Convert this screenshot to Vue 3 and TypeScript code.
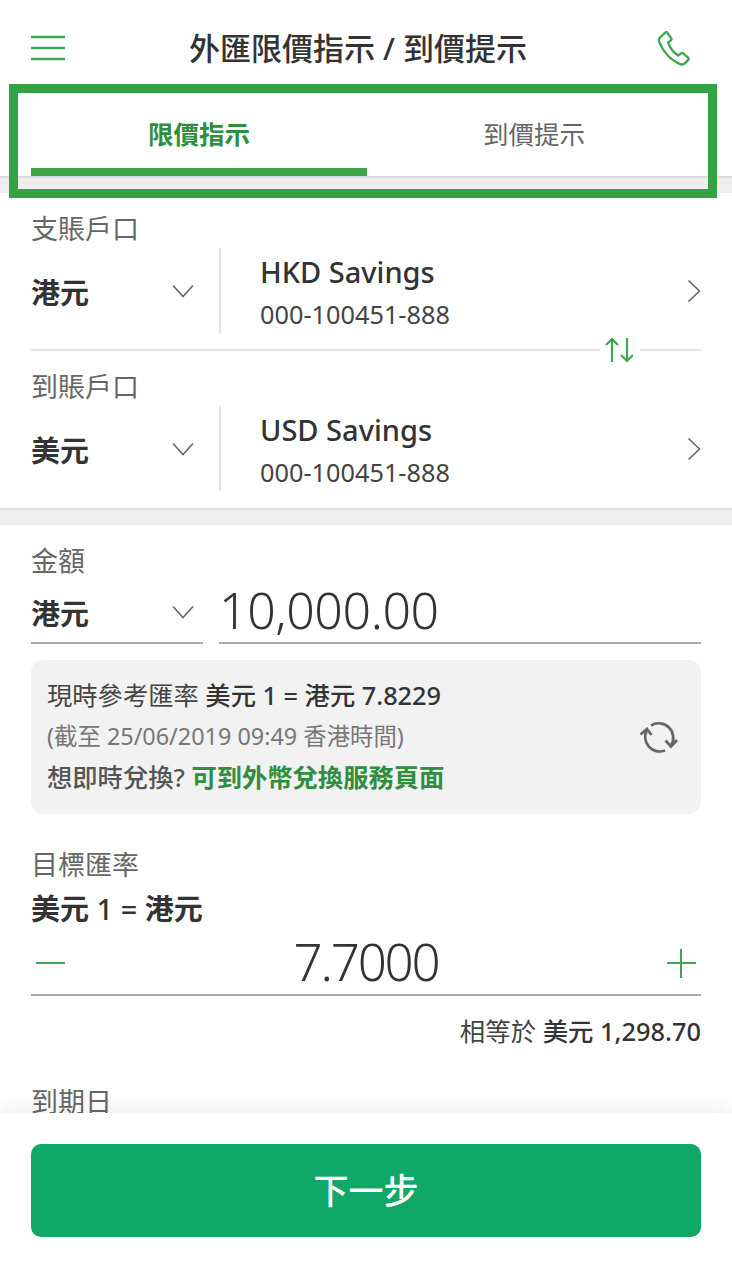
<script setup lang="ts">
interface Account {
  label: string
  currency: string
  name: string
  number: string
}

const accounts: Account[] = [
  { label: '支賬戶口', currency: '港元', name: 'HKD Savings', number: '000-100451-888' },
  { label: '到賬戶口', currency: '美元', name: 'USD Savings', number: '000-100451-888' },
]
</script>

<template>
  <div class="page">
    <div class="content">
      <header class="header">
        <svg class="menu" width="36" height="26" viewBox="0 0 36 26" fill="none" stroke="#3fa652" stroke-width="2.4">
          <path d="M1 2h34M1 13h34M1 24h34" />
        </svg>
        <h1 class="title">外匯限價指示 / 到價提示</h1>
        <svg class="phone" width="36" height="36" viewBox="0 0 36 36" fill="none" stroke="#3fa652" stroke-width="2.4" stroke-linejoin="round">
          <path d="M3 7.5 8.2 2.6c.8-.7 1.7-.6 2.3.2l3.6 5.4c.5.8.4 1.6-.3 2.2l-2.6 2.2c1.5 4.700 5.500 10 10 13l2.900-2.300c.7-.5 1.500-.5 2.200.1l4.800 4.200c.8.700.8 1.600.1 2.300l-3.400 3.500c-1.200 1.100-2.900 1.400-4.500.7C13.500 30.500 5.500 21 2.300 11.800 1.800 10.200 2 8.600 3 7.500Z" />
        </svg>
      </header>

      <div class="tabs-wrap">
        <nav class="tabs">
          <div class="tab tab--active">限價指示</div>
          <div class="tab">到價提示</div>
        </nav>
        <div class="band"></div>
        <div class="frame"></div>
      </div>

      <section class="accounts">
        <template v-for="(acc, i) in accounts" :key="acc.label">
          <div class="label">{{ acc.label }}</div>
          <div class="account-row">
            <div class="currency">
              <span>{{ acc.currency }}</span>
              <svg width="22" height="14" viewBox="0 0 22 14" fill="none" stroke="#666" stroke-width="1.600">
                <path d="M1 1.500 11 12.500 21 1.500" />
              </svg>
            </div>
            <div class="account">
              <div class="account-name">{{ acc.name }}</div>
              <div class="account-number">{{ acc.number }}</div>
            </div>
            <svg class="arrow" width="14" height="24" viewBox="0 0 14 24" fill="none" stroke="#666" stroke-width="1.600">
              <path d="M1.500 1.500 12.500 12 1.500 22.500" />
            </svg>
          </div>
          <div v-if="i === 0" class="separator">
            <svg class="swap" width="28" height="26" viewBox="0 0 28 26" fill="none" stroke="#3fa652" stroke-width="2.200">
              <path d="M7 25V2M1 8 7 2l6 6M22 1v23M16 18l6 6 6-6" />
            </svg>
          </div>
        </template>
      </section>

      <div class="band"></div>

      <section class="form">
        <div class="label">金額</div>
        <div class="amount-row">
          <div class="currency currency--input">
            <span>港元</span>
            <svg width="22" height="14" viewBox="0 0 22 14" fill="none" stroke="#666" stroke-width="1.600">
              <path d="M1 1.500 11 12.500 21 1.500" />
            </svg>
          </div>
          <div class="amount">10,000.00</div>
        </div>

        <div class="rate-card">
          <div class="rate-text">
            <p class="rate-line">現時參考匯率 <b>美元 1 = 港元 7.8229</b></p>
            <p class="rate-line rate-line--muted">(截至 25/06/2019 09:49 香港時間)</p>
            <p class="rate-line rate-line--cta"><b>想即時兌換?</b> <a class="link">可到外幣兌換服務頁面</a></p>
          </div>
          <svg class="refresh" width="40" height="36" viewBox="18 15 40 36" fill="none" stroke="#666" stroke-width="2.700">
            <path d="M30 20.500A14.500 14.500 0 0 1 50 40.500" />
            <path d="M44.500 35.500 50 41.500 56 35" />
            <path d="M44 45.500A14.500 14.500 0 0 1 26 25" />
            <path d="M19.500 29.500 26 24 30.500 30" />
          </svg>
        </div>

        <div class="label label--target">目標匯率</div>
        <div class="pair"><b>美元</b> 1 = <b>港元</b></div>
        <div class="stepper">
          <span class="step step--minus"></span>
          <span class="rate-value">7.7000</span>
          <span class="step step--plus"></span>
        </div>
        <div class="equal">相等於 <b>美元 1,298.70</b></div>
        <div class="label label--expiry">到期日</div>
      </section>
    </div>

    <footer class="footer">
      <button class="next" type="button">下一步</button>
    </footer>
  </div>
</template>

<style scoped>
.page {
  position: relative;
  width: 732px;
  height: 1269px;
  display: flex;
  flex-direction: column;
  overflow: hidden;
  background: #fff;
  font-family: "Noto Sans", "Noto Sans CJK TC", sans-serif;
  color: #333;
}

.content {
  flex: 1;
  min-height: 0;
  overflow: hidden;
}

.header {
  height: 84px;
  display: flex;
  align-items: center;
  justify-content: space-between;
  padding: 0 39px 0 30px;
  position: relative;
}

.menu {
  margin-top: 12px;
}

.phone {
  margin-top: 11px;
}

.title {
  margin: 0;
  position: absolute;
  left: 0;
  right: 16px;
  top: 26px;
  line-height: 44px;
  text-align: center;
  font-size: 31px;
  font-weight: 500;
  color: #333;
}

.tabs-wrap {
  position: relative;
}

.tabs {
  display: flex;
  padding: 0 31px;
  height: 92px;
}

.tab {
  flex: 1;
  text-align: center;
  font-size: 25.5px;
  line-height: 100px;
  height: 92px;
  box-sizing: border-box;
  color: #666;
}

.tab--active {
  flex: 0 0 336px;
  color: #2f8f3e;
  font-weight: 700;
  border-bottom: 8px solid #3fa648;
}

.band {
  height: 17px;
  box-sizing: border-box;
  background: #eee;
  border-top: 2px solid #ddd;
}

.frame {
  position: absolute;
  left: 9px;
  top: 0;
  width: 708px;
  height: 114px;
  box-sizing: border-box;
  border: 9px solid #34a244;
}

.accounts {
  padding: 18px 31px 17px;
}

.label {
  font-size: 27px;
  line-height: 36px;
  color: #666;
}

.account-row {
  display: flex;
  align-items: center;
  height: 85px;
  margin-top: 1px;
}

.currency {
  width: 190px;
  flex: none;
  height: 100%;
  box-sizing: border-box;
  display: flex;
  align-items: center;
  justify-content: space-between;
  padding-right: 25px;
  border-right: 2px solid #e4e4e4;
  font-size: 29px;
  font-weight: 700;
  color: #333;
}

.account {
  flex: 1;
  padding: 4px 0 0 39px;
}

.account-name {
  font-size: 29px;
  line-height: 42px;
  font-weight: 500;
  color: #333;
}

.account-number {
  font-size: 25.3px;
  line-height: 42px;
  color: #444;
}

.arrow {
  flex: none;
}

.separator {
  position: relative;
  height: 2px;
  margin: 16px 0 18px;
  background: #e2e2e2;
}

.swap {
  position: absolute;
  right: 61px;
  top: -12px;
  padding: 0 7px 0 5px;
  background: #fff;
}

.form {
  padding: 18px 31px 0;
}

.amount-row {
  display: flex;
  gap: 16px;
  height: 65px;
}

.currency--input {
  width: 172px;
  padding: 2px 9px 0 0;
  border-right: none;
  border-bottom: 2px solid #aaa;
}

.amount {
  flex: 1;
  border-bottom: 2px solid #aaa;
  font-size: 50px;
  font-weight: 300;
  line-height: 63px;
  letter-spacing: -0.4px;
  color: #333;
}

.rate-card {
  margin-top: 16px;
  height: 154px;
  box-sizing: border-box;
  padding: 15px 22px 0 16px;
  border-radius: 12px;
  background: #f2f2f2;
  display: flex;
  align-items: flex-start;
  justify-content: space-between;
}

.rate-line {
  margin: 0;
  font-size: 25.3px;
  line-height: 41px;
  color: #444;
  white-space: nowrap;
}

.rate-line b {
  font-weight: 500;
  color: #333;
}

.rate-line--muted {
  font-size: 23.4px;
  color: #777;
}

.rate-line--cta b {
  font-weight: 500;
  color: #555;
}

.link {
  font-weight: 700;
  color: #2f8f3e;
}

.refresh {
  margin-top: 45px;
}

.label--target {
  margin-top: 33px;
}

.pair {
  margin-top: 8px;
  font-size: 29px;
  line-height: 36px;
  font-weight: 500;
  color: #333;
}

.pair b {
  font-weight: 700;
}

.stepper {
  height: 69px;
  box-sizing: border-box;
  display: flex;
  align-items: center;
  justify-content: space-between;
  border-bottom: 2px solid #aaa;
  padding: 0 5px;
}

.rate-value {
  margin-top: 2px;
  font-size: 51px;
  font-weight: 300;
  line-height: 69px;
  letter-spacing: -2.2px;
  color: #333;
}

.step {
  position: relative;
  width: 29px;
  height: 29px;
  margin-top: 5px;
}

.step--minus::before,
.step--plus::before {
  content: "";
  position: absolute;
  left: 0;
  right: 0;
  top: 13px;
  height: 2px;
  background: #3fa652;
}

.step--plus::after {
  content: "";
  position: absolute;
  top: 0;
  bottom: 0;
  left: 13px;
  width: 2px;
  background: #3fa652;
}

.equal {
  margin-top: 17px;
  text-align: right;
  font-size: 25.4px;
  line-height: 36px;
  color: #444;
}

.equal b {
  font-weight: 500;
  color: #333;
}

.label--expiry {
  margin-top: 35px;
}

.footer {
  position: relative;
  flex: none;
  height: 156px;
  box-sizing: border-box;
  padding: 31px 31px 0;
  background: #fff;
  box-shadow: 0 -8px 14px rgba(0, 0, 0, 0.05);
}

.next {
  display: block;
  width: 100%;
  height: 93px;
  padding: 0 0 5px;
  border: none;
  border-radius: 10px;
  background: #0fa866;
  color: #fff;
  font-family: inherit;
  font-size: 35px;
  font-weight: 500;
}
</style>
